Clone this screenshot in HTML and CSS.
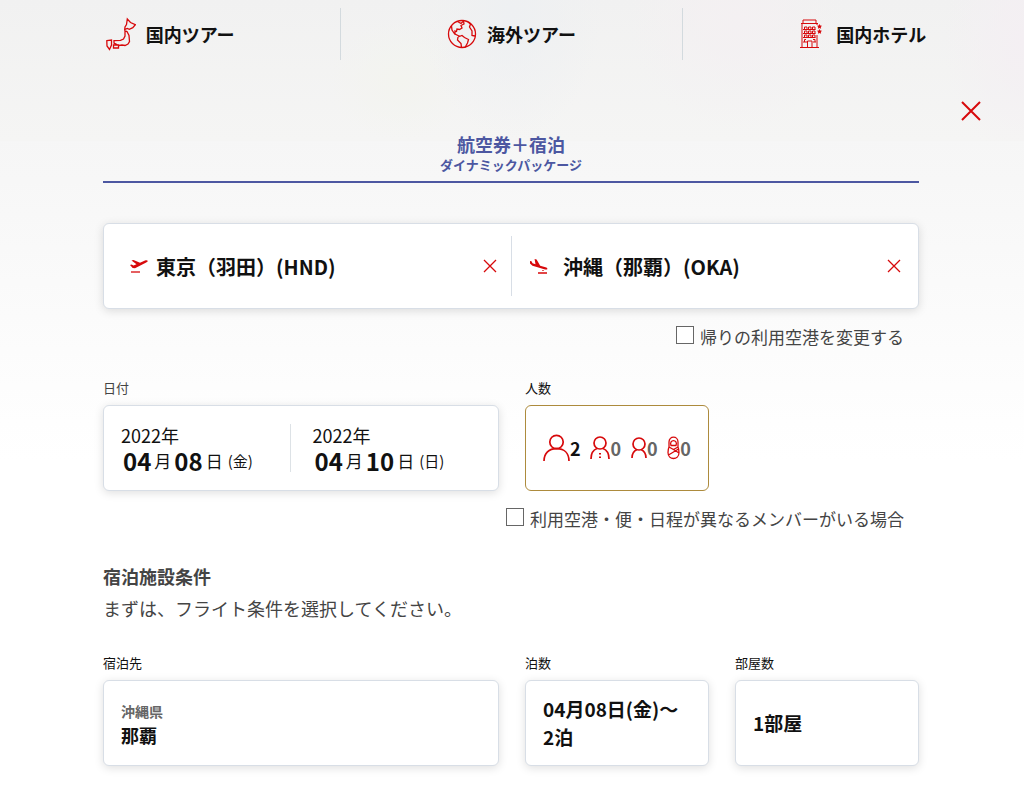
FILE: index.html
```html
<!DOCTYPE html>
<html lang="ja">
<head>
<meta charset="utf-8">
<meta name="viewport" content="width=device-width, initial-scale=1">
<title>航空券＋宿泊 ダイナミックパッケージ</title>
<link rel="stylesheet" href="styles.css">
</head>
<body>
<header class="hero">
  <nav class="nav">
    <a class="nav-item" href="#domestic">
      <svg class="nav-icon" viewBox="0 0 30 34" aria-hidden="true"><path d="M21.300 2l3.200 3.500 4.800 2.200-2.500 3-3.500 1.600-2-.8-2.600 1 .3-2.500 1.500-2.500zM19 14l2 .5 2 4 .5 6-1.500 2.500-3 1.500-3-.5-3 .5-5-2.500v-2.300l6.500-.4 3-1.300 1.500-3zM7.500 28h5v3h-5zM.8 23.700l4.700-.7v5l-2 4.500L1 29z"/></svg>
      <span>国内ツアー</span>
    </a>
    <a class="nav-item" href="#overseas">
      <svg class="nav-icon" viewBox="0 0 30 34" aria-hidden="true"><circle cx="15" cy="17" r="13.500"/><path d="M10.500 4.500l3.500 2 2.500-2.500.5 3-3 1.500 1 2.500-2.500 1.500-2.500-.5-.5 2.500-1.500-.5v3l3 1.500 2 1M4.500 9L5 13l3 4.500M11 20l4-1.500 2.500 2 4 2-1 3.500-2.500 4.500M11 20l-.5 3 3.500 3.500.5 4M21 5l2.500 2-1 3 2.500 4v4.500l3 .5"/></svg>
      <span>海外ツアー</span>
    </a>
    <a class="nav-item" href="#hotel">
      <svg class="nav-icon hotel" viewBox="0 0 30 34" aria-hidden="true"><path d="M7 6V3h13v3M5 6.500h17M6 6.500V30M21 6.500V8M21 18v12M4 30.500h19M8.500 12.500V10h2.500v2.500M12.500 12.500V10H15v2.500M16.500 12.500V10H19v2.500M8.500 16.500V14h2.500v2.500M12.500 16.500V14H15v2.500M16.500 16.500V14H19v2.500M8.500 20.500V18h2.500v2.500M12.500 20.500V18H15v2.500M16.500 20.500V18H19v2.500M7 12.500h12.500M7 16.500h12.500M7 20.500h12.500M7 25h4M17 25h3M8.500 25v-2.500H10M17 22.500h2V25M11.500 30v-6h4.500v6"/><path class="solid" d="M23.500 7l.8 1.600 1.700.2-1.200 1.200.3 1.700-1.600-.8-1.600.8.3-1.700L21 8.800l1.700-.2zM23.500 12l.8 1.600 1.700.2-1.200 1.200.3 1.700-1.600-.8-1.600.8.3-1.700-1.200-1.200 1.700-.2z"/></svg>
      <span>国内ホテル</span>
    </a>
  </nav>
  <div class="close-row">
    <button class="icon-button close" type="button" aria-label="閉じる"><svg viewBox="0 0 20 20"><path d="M1 1l18 18M19 1L1 19"/></svg></button>
  </div>
</header>

<main class="content">
  <h1 class="tab"><span class="tab-title">航空券＋宿泊</span><span class="tab-sub">ダイナミックパッケージ</span></h1>

  <form class="search">
    <div class="card route">
      <div class="airport">
        <svg class="plane" viewBox="0 0 18 15" aria-hidden="true"><path class="solid" d="M0 6l1.500-.5 2 1 3-1.200L1.500 1.600l2-.7 6.500 2.800 5-2.200c1.200-.5 2.400-.3 2.700.2.200.6-.5 1.300-1.500 1.700L5 9.300l-2.300-.2z"/><path d="M1 13h9"/></svg>
        <input class="airport-name" type="text" value="東京（羽田）(HND)" aria-label="出発空港">
        <button class="icon-button" type="button" aria-label="出発空港をクリア"><svg viewBox="0 0 14 14"><path d="M1 1l12 12M13 1L1 13"/></svg></button>
      </div>
      <div class="airport arrival">
        <svg class="plane" viewBox="0 0 18 15" aria-hidden="true"><path class="solid" d="M0 2l1.500.2 1 2 3 1L4.600 0l2 .6 3.600 6.200 5.300 1.500c1.300.4 2.100 1.200 1.900 1.800-.2.600-1.200.6-2.300.300L2.500 6.800 0 4.500z"/><path d="M8 14h9M13 11v1"/></svg>
        <input class="airport-name" type="text" value="沖縄（那覇）(OKA)" aria-label="到着空港">
        <button class="icon-button" type="button" aria-label="到着空港をクリア"><svg viewBox="0 0 14 14"><path d="M1 1l12 12M13 1L1 13"/></svg></button>
      </div>
    </div>
    <div class="option"><input class="check" type="checkbox" id="change-return"><label for="change-return">帰りの利用空港を変更する</label></div>

    <div class="fields">
      <div class="field">
        <span class="field-label muted" id="date-label">日付</span>
        <button class="card dates" type="button" aria-describedby="date-label">
          <span class="date"><span class="year">2022年</span><span class="day"><b>04</b><span class="unit">月</span><b>08</b><span class="unit">日</span><span class="weekday">(金)</span></span></span>
          <span class="date"><span class="year">2022年</span><span class="day"><b>04</b><span class="unit">月</span><b>10</b><span class="unit">日</span><span class="weekday">(日)</span></span></span>
        </button>
      </div>
      <div class="field">
        <span class="field-label" id="people-label">人数</span>
        <button class="card people" type="button" aria-describedby="people-label">
          <span class="count adult"><svg width="27" height="28" viewBox="0 0 27 28"><circle cx="13.500" cy="8" r="6.700"/><path d="M1 27c0-8 5-12.300 12.500-12.300S26 19 26 27"/></svg>2</span>
          <span class="count"><svg width="20" height="24" viewBox="0 0 20 24"><circle cx="10" cy="7" r="6"/><path d="M1 23c0-5 2-9 6-10.500M19 23c0-5-2-9-6-10.500"/><path class="dots" d="M10 17v6"/></svg>0</span>
          <span class="count"><svg width="16" height="22" viewBox="0 0 16 22"><circle cx="8" cy="7" r="6"/><path d="M1 21c0-5 1.500-7 5-8.500M15 21c0-5-1.500-7-5-8.500"/></svg>0</span>
          <span class="count"><svg class="infant" width="13" height="24" viewBox="0 0 13 24"><path d="M2 11V6c0-6.500 9-6.500 9 0v5M4 9.500c-2.500-6.500 7.500-6.500 5 0zM2 11c-1 2-1 4-1 5.500 0 8 11 8 11 0 0-1.500 0-3.500-1-5.500M2 11l4.500 2.500L11 11M6.500 13.500L12 17M11.500 13L1.500 19"/></svg>0</span>
        </button>
      </div>
    </div>
    <div class="option"><input class="check" type="checkbox" id="different-members"><label for="different-members">利用空港・便・日程が異なるメンバーがいる場合</label></div>

    <section class="lodging">
      <h2 class="section-title">宿泊施設条件</h2>
      <p class="section-text">まずは、フライト条件を選択してください。</p>
    </section>

    <div class="fields">
      <div class="field">
        <span class="field-label" id="place-label">宿泊先</span>
        <button class="card value place" type="button" aria-describedby="place-label"><span class="prefecture">沖縄県</span><span>那覇</span></button>
      </div>
      <div class="field">
        <span class="field-label" id="nights-label">泊数</span>
        <button class="card value" type="button" aria-describedby="nights-label"><span>04月08日(金)〜</span><span>2泊</span></button>
      </div>
      <div class="field">
        <span class="field-label" id="rooms-label">部屋数</span>
        <button class="card value" type="button" aria-describedby="rooms-label"><span>1部屋</span></button>
      </div>
    </div>
    <div class="next-field"><span class="field-label">人数</span></div>
  </form>
</main>
</body>
</html>
```
FILE: styles.css
```css
* { box-sizing: border-box; }

body {
  margin: 0;
  font-family: "Noto Sans CJK JP", sans-serif;
  color: #111;
  background: linear-gradient(#f3f3f3 0, #f7f7f7 180px, #fcfcfc 350px, #fff 460px);
}

button, input { font: inherit; color: inherit; }
button { cursor: pointer; }
svg { flex: none; fill: none; stroke: #d7090b; stroke-width: 1.3; }
.solid { fill: #d7090b; stroke: none; }

.hero {
  height: 141px;
  padding-top: 8px;
  background:
    radial-gradient(ellipse 90px 130px at 50% 10px, #eef0f2, transparent),
    radial-gradient(ellipse 70px 60px at 39% 80px, #f3f4ef, transparent),
    radial-gradient(ellipse 110px 110px at 72% 20px, #f4f0f2, transparent),
    radial-gradient(ellipse 80px 120px at 100% 40px, #f4eff3, transparent),
    linear-gradient(#f1f1f1, #f5f5f4);
}

.nav { display: grid; grid-template-columns: repeat(3, 1fr); }
.nav-item {
  display: flex;
  align-items: center;
  justify-content: center;
  gap: 10px;
  height: 52px;
  font-size: 18px;
  font-weight: 700;
  color: #111;
  text-decoration: none;
  border-right: 1px solid #d3dade;
}
.nav-item:last-child { border-right: 0; padding-left: 16px; }
.nav-icon { width: 30px; height: 34px; }
.hotel { stroke-width: 1; }

.close-row { display: flex; justify-content: flex-end; padding: 37px 39px 0 0; }
.icon-button {
  display: flex;
  align-items: center;
  justify-content: center;
  flex: none;
  width: 28px;
  height: 28px;
  padding: 0;
  border: 0;
  background: none;
}
.icon-button svg { width: 14px; height: 14px; }
.close svg { width: 20px; height: 20px; stroke-width: 2; }

.content { padding: 0 105px 0 103px; margin-top: -9px; }

.tab {
  display: flex;
  flex-direction: column;
  margin: 0 0 40px;
  padding-bottom: 7px;
  border-bottom: 2px solid #4c57a1;
  color: #4c57a1;
  text-align: center;
}
.tab-title { font-size: 18px; line-height: 24px; }
.tab-sub { font-size: 13px; line-height: 18px; }

.card {
  width: 100%;
  min-height: 86px;
  border: 1px solid #d8dee6;
  border-radius: 6px;
  background: #fff;
  box-shadow: 0 2px 10px rgba(0, 0, 0, .13);
}

.route { display: grid; grid-template-columns: repeat(2, minmax(0, 1fr)); align-items: center; }
.airport { display: flex; align-items: center; height: 60px; padding: 0 7px 0 26px; }
.arrival { border-left: 1px solid #d8dee6; padding: 0 10px 0 18px; }
.plane { width: 18px; height: 15px; }
.airport-name {
  flex: 1;
  min-width: 0;
  margin-left: 8px;
  padding: 0;
  border: 0;
  outline: 0;
  background: none;
  font-size: 20px;
  font-weight: 700;
}
.arrival .airport-name { margin-left: 15px; }

.option {
  display: flex;
  align-items: center;
  justify-content: flex-end;
  gap: 6px;
  margin-top: 16px;
  padding-right: 15px;
  font-size: 17px;
  line-height: 24px;
  color: #444;
}
.check {
  appearance: none;
  width: 18px;
  height: 18px;
  margin: 0 0 4px;
  border: 1px solid #666;
  background: #fff;
}
.check:checked { background: #4c57a1; }

.fields {
  display: grid;
  grid-template-columns: minmax(0, 1fr) 184px 184px;
  gap: 26px;
  margin-top: 29px;
}
.field { display: flex; flex-direction: column; gap: 7px; }
.field-label { font-size: 13px; line-height: 20px; }
.muted { color: #444; }

.dates { display: flex; align-items: center; padding: 0 17px; text-align: left; }
.date { display: flex; flex-direction: column; width: 169px; height: 48px; justify-content: center; }
.date + .date { border-left: 1px solid #dde2e6; padding-left: 22px; width: 192px; }
.year { font-size: 18px; line-height: 26px; }
.day { display: flex; align-items: center; gap: 3px; padding-left: 2px; line-height: 26px; }
.day b { font-size: 24px; }
.unit { font-size: 17px; }
.weekday { font-size: 15px; margin-left: 2px; }

.people {
  display: flex;
  align-items: center;
  justify-content: space-between;
  padding: 0 17px;
  border-color: #ad8b3d;
  box-shadow: none;
}
.count { display: flex; align-items: center; font-size: 18px; font-weight: 700; color: #666; }
.people svg { stroke-width: 1.7; }
.people .infant { stroke-width: 1.3; }
.adult { color: #111; }
.people .dots { stroke-dasharray: 1.5 2; stroke-width: 2; }

.lodging { margin-top: 29px; color: #444; }
.section-title, .section-text { margin: 0; font-size: 18px; line-height: 32px; }

.value {
  display: flex;
  flex-direction: column;
  justify-content: center;
  padding: 0 17px;
  font-size: 19px;
  font-weight: 700;
  line-height: 28px;
  text-align: left;
}
.place { font-size: 18px; line-height: 24px; }
.prefecture { font-size: 14px; color: #666; }

.next-field { margin-top: 29px; }
```
